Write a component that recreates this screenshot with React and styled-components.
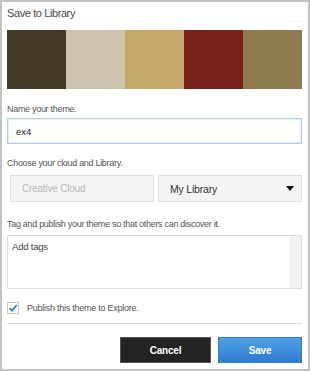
import React from "react";
import styled, { createGlobalStyle } from "styled-components";

const GlobalStyle = createGlobalStyle`
  html, body {
    margin: 0;
    padding: 0;
    background: #fff;
  }
  * {
    box-sizing: border-box;
  }
`;

const swatches = ["#433a28", "#cfc5ae", "#c5a96a", "#76221d", "#8e7c50"];

function App() {
  return (
    <>
      <GlobalStyle />
      <Dialog>
        <Title>Save to Library</Title>
        <Palette>
          {swatches.map((c) => (
            <Swatch key={c} $color={c} />
          ))}
        </Palette>

        <Label $top={15}>Name your theme.</Label>
        <TextInput defaultValue="ex4" />

        <Label $top={14}>Choose your cloud and Library.</Label>
        <SelectRow>
          <SelectBox $disabled>Creative Cloud</SelectBox>
          <SelectBox>
            My Library
            <Caret viewBox="0 0 8 5">
              <path d="M0 0h8L4 5z" fill="#111" />
            </Caret>
          </SelectBox>
        </SelectRow>

        <Label $top={17}>Tag and publish your theme so that others can discover it.</Label>
        <TagArea>
          <span>Add tags</span>
          <Scrollbar />
        </TagArea>

        <CheckRow>
          <CheckBox>
            <svg width="10" height="10" viewBox="0 0 10 10">
              <path d="M1.5 5.2 L4 7.6 L8.7 2" fill="none" stroke="#2a7fd4" strokeWidth="1.8" />
            </svg>
          </CheckBox>
          Publish this theme to Explore.
        </CheckRow>

        <Divider />

        <Actions>
          <Button $variant="dark">Cancel</Button>
          <Button $variant="primary">Save</Button>
        </Actions>
      </Dialog>
    </>
  );
}

const Dialog = styled.div`
  width: 310px;
  height: 371px;
  border: 2px solid #c2c2c2;
  padding: 0 6px 0 5px;
  display: flex;
  flex-direction: column;
  font-family: "Liberation Sans", Arial, sans-serif;
  color: #4b4b4b;
`;

const Title = styled.div`
  height: 28px;
  padding-top: 5px;
  font-size: 11px;
  letter-spacing: -0.4px;
  color: #4a4a4a;
`;

const Palette = styled.div`
  display: flex;
  height: 59px;
`;

const Swatch = styled.div`
  flex: 1;
  background: ${(p) => p.$color};
`;

const Label = styled.div`
  margin-top: ${(p) => p.$top}px;
  font-size: 9px;
  letter-spacing: -0.3px;
  color: #555;
  line-height: 11px;
`;

const TextInput = styled.input`
  margin-top: 3px;
  height: 26px;
  width: 100%;
  border: 1px solid #b6cfe6;
  box-shadow: inset 0 0 0 1px #e4eef8;
  padding: 0 8px;
  font-family: inherit;
  font-size: 9.5px;
  color: #222;
  outline: none;
`;

const SelectRow = styled.div`
  margin-top: 6px;
  padding-left: 3px;
  display: flex;
  gap: 4px;
`;

const SelectBox = styled.div`
  flex: 1;
  height: 27px;
  display: flex;
  align-items: center;
  justify-content: space-between;
  padding: 0 7px 0 11px;
  background: #f4f4f4;
  border: 1px solid #dedede;
  font-size: ${(p) => (p.$disabled ? "10px" : "10.5px")};
  letter-spacing: -0.2px;
  color: ${(p) => (p.$disabled ? "#b9b9b9" : "#333")};
`;

const Caret = styled.svg`
  width: 8px;
  height: 5px;
`;

const TagArea = styled.div`
  margin-top: 5px;
  height: 54px;
  border: 1px solid #dcdcdc;
  display: flex;
  justify-content: space-between;
  font-size: 9.5px;
  letter-spacing: -0.2px;
  color: #444;

  span {
    padding: 5px 0 0 4px;
  }
`;

const Scrollbar = styled.div`
  width: 11px;
  background: #f3f3f3;
  border-left: 1px solid #ececec;
`;

const CheckRow = styled.label`
  margin-top: 13px;
  display: flex;
  align-items: center;
  gap: 8px;
  font-size: 9px;
  letter-spacing: -0.25px;
  color: #555;
`;

const CheckBox = styled.span`
  width: 12px;
  height: 12px;
  border: 1px solid #c8c8c8;
  background: #fff;
  display: flex;
  align-items: center;
  justify-content: center;
`;

const Divider = styled.div`
  margin-top: 9px;
  height: 1px;
  background: #dcdcdc;
`;

const Actions = styled.div`
  margin-top: 13px;
  display: flex;
  justify-content: flex-end;
  gap: 7px;
`;

const Button = styled.button`
  height: 26px;
  width: ${(p) => (p.$variant === "dark" ? "91px" : "84px")};
  font-family: inherit;
  font-size: 10px;
  font-weight: bold;
  letter-spacing: -0.2px;
  color: #fff;
  border: 1px solid ${(p) => (p.$variant === "dark" ? "#555" : "#2f7ccc")};
  background: ${(p) =>
    p.$variant === "dark"
      ? "#232323"
      : "linear-gradient(#4f9fe4, #2e7dd0)"};
  padding: 0;
`;

export default App;
